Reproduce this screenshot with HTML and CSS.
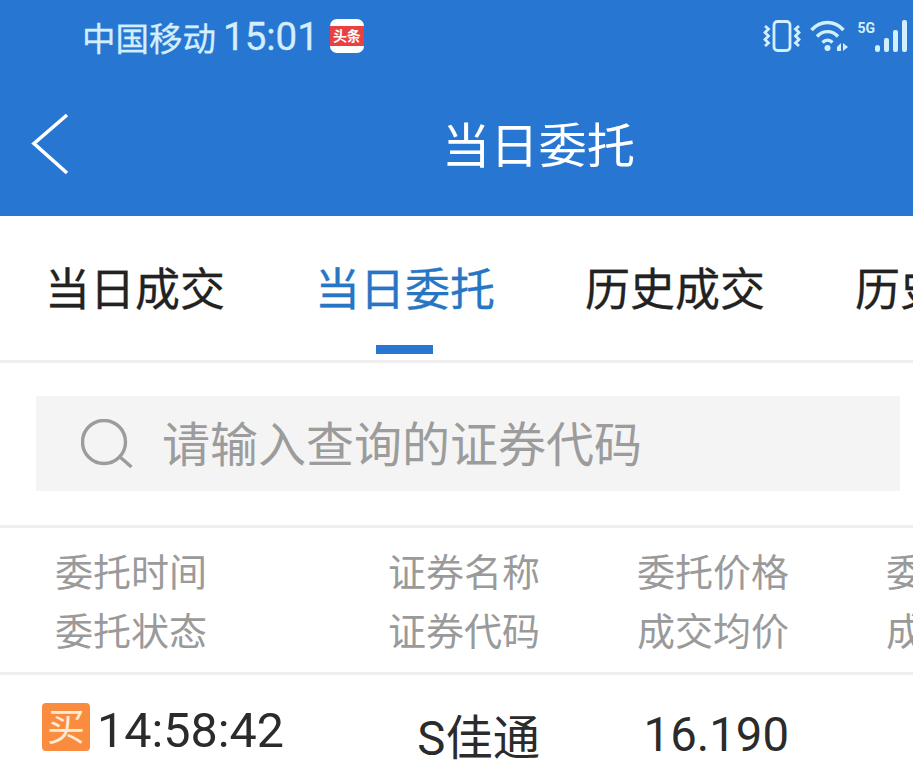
FILE: index.html
```html
<!DOCTYPE html>
<html>
<head>
  <title>当日委托</title>
  <link rel="stylesheet" href="styles.css">
</head>
<body>

  <div class="top">
    <div class="status">
      <div class="status-left">
        <span class="carrier">中国移动</span>
        <span class="clock">15:01</span>
        <span class="app-badge"><span class="app-band">头条</span></span>
      </div>
      <div class="status-right">
        <svg width="38" height="32" viewBox="0 0 38 32" fill="none" stroke="#d3eefc" stroke-width="2.800">
          <rect x="11" y="1.500" width="16" height="29" rx="3.500"/>
          <path d="M2 6 L5.500 9 L2 12.500 L5.500 16 L2 19.500 L5.500 23 L2 26"/>
          <path d="M36 6 L32.500 9 L36 12.500 L32.500 16 L36 19.500 L32.500 23 L36 26"/>
        </svg>
        <svg width="38" height="32" viewBox="0 0 38 32" fill="none" stroke="#d3eefc" stroke-width="3.400">
          <path d="M1.500 10 C10.500 0 24.500 0 33.500 10"/>
          <path d="M7 16.500 C13 10 22 10 28 16.500"/>
          <path d="M12.500 22.500 C15.500 19.500 19.500 19.500 22.500 22.500"/>
          <circle cx="17.500" cy="28" r="3" fill="#d3eefc" stroke="none"/>
          <path d="M27 27 L31 23 V31 H27 Z" fill="#d3eefc" stroke="none"/>
          <path d="M33 23 L38 27 L33 31 Z" fill="#d3eefc" stroke="none"/>
        </svg>
        <div class="signal">
          <span class="net">5G</span>
          <svg width="32" height="32" viewBox="0 0 32 32" fill="#d3eefc">
            <rect x="0" y="25" width="5" height="7" rx="2.500"/>
            <rect x="9" y="18" width="5" height="14" rx="2"/>
            <rect x="18" y="10" width="5" height="22" rx="2"/>
            <rect x="27" y="0" width="5" height="32" rx="2"/>
          </svg>
        </div>
      </div>
    </div>
    <div class="navbar">
      <svg class="back" width="40" height="62" viewBox="0 0 40 62" fill="none" stroke="#fff" stroke-width="3.600">
        <path d="M36 2 L3 30.500 L36 60"/>
      </svg>
      <div class="nav-title">当日委托</div>
    </div>
  </div>

  <div class="tabs">
    <div class="tab">当日成交</div>
    <div class="tab active">当日委托</div>
    <div class="tab">历史成交</div>
    <div class="tab">历史委托</div>
  </div>

  <div class="search-wrap">
    <div class="search">
      <svg width="52" height="50" viewBox="0 0 52 50" fill="none" stroke="#9c9c9c" stroke-width="3.400">
        <circle cx="23" cy="23" r="21.500"/>
        <path d="M39 38 L50.500 48"/>
      </svg>
      <span class="placeholder">请输入查询的证券代码</span>
    </div>
  </div>

  <div class="grid head">
    <div class="cell first"><div>委托时间</div><div>委托状态</div></div>
    <div class="cell"><div>证券名称</div><div>证券代码</div></div>
    <div class="cell"><div>委托价格</div><div>成交均价</div></div>
    <div class="cell"><div>委托数量</div><div>成交数量</div></div>
  </div>

  <div class="grid row">
    <div class="cell first time-cell"><span class="buy">买</span><span class="time">14:58:42</span></div>
    <div class="cell val">S佳通</div>
    <div class="cell val">16.190</div>
    <div class="cell val"></div>
  </div>

</body>
</html>
```

FILE: styles.css
```css
html, body {
  margin: 0;
  height: 763px;
  overflow: hidden;
}
body {
  font-family: Roboto, "Noto Sans CJK SC", sans-serif;
  background: #fff;
  color: #2b2b2b;
}
.top {
  height: 216px;
  background: #2776d2;
  color: #fff;
}
.status {
  height: 72px;
  display: flex;
  justify-content: space-between;
  align-items: center;
  padding: 0 0 0 82px;
}
.status-left {
  display: flex;
  align-items: center;
  color: #d3eefc;
}
.carrier {
  font-size: 33.500px;
  -webkit-text-stroke: 0.3px #d3eefc;
}
.clock {
  font-size: 38.500px;
  margin-left: 7px;
  -webkit-text-stroke: 0.3px #d3eefc;
}
.app-badge {
  width: 34px;
  height: 34px;
  margin-left: 11px;
  border-radius: 7px;
  background: #fff;
  display: flex;
  align-items: center;
}
.app-band {
  width: 100%;
  height: 20px;
  line-height: 20px;
  background: #e8413f;
  color: #fff;
  font-size: 14px;
  font-weight: 700;
  text-align: center;
}
.status-right {
  display: flex;
  align-items: center;
  gap: 9px;
  padding-right: 6px;
}
.signal {
  display: flex;
  align-items: flex-start;
}
.net {
  color: #d3eefc;
  font-size: 14px;
  font-weight: 700;
  line-height: 16px;
}
.navbar {
  height: 140px;
  display: flex;
  align-items: center;
  justify-content: center;
  padding-left: 164px;
  position: relative;
}
.back {
  position: absolute;
  left: 31px;
  top: 41px;
}
.nav-title {
  font-size: 48.300px;
}
.tabs {
  height: 144px;
  display: flex;
  gap: 92px;
  padding-left: 45px;
  overflow: hidden;
  border-bottom: 3px solid #eeeeee;
}
.tab {
  flex: none;
  width: 178px;
  font-size: 45px;
  line-height: 150px;
  white-space: nowrap;
  color: #222;
  position: relative;
  -webkit-text-stroke: 0.3px;
}
.tab.active {
  color: #2776c4;
}
.tab.active::after {
  content: "";
  position: absolute;
  left: 61px;
  bottom: 6px;
  width: 57px;
  height: 9px;
  background: #2776d2;
}
.search-wrap {
  height: 165px;
  padding: 33px 13px 0 36px;
  box-sizing: border-box;
  border-bottom: 3px solid #eeeeee;
}
.search {
  height: 95px;
  background: #f4f4f4;
  display: flex;
  align-items: center;
  padding-left: 45px;
}
.placeholder {
  font-size: 48px;
  line-height: 93px;
  padding-top: 4px;
  color: #9c9c9c;
  margin-left: 29px;
  white-space: nowrap;
}
.grid {
  display: grid;
  grid-template-columns: 236px 249px 249px 249px;
  padding-left: 55px;
  width: 1100px;
}
.head {
  height: 147px;
  box-sizing: border-box;
  border-bottom: 3px solid #eeeeee;
  align-content: center;
  padding-top: 5px;
  font-size: 38px;
  line-height: 59px;
  color: #9a9a9a;
}
.cell {
  text-align: right;
}
.cell.first {
  text-align: left;
}
.row {
  align-items: center;
  height: 88px;
  color: #2b2b2b;
}
.time-cell {
  display: flex;
  align-items: center;
  margin-left: -13px;
  padding-top: 10px;
  white-space: nowrap;
}
.buy {
  width: 48px;
  height: 48px;
  border-radius: 4px;
  background: #fa8c3f;
  color: #fdebd3;
  font-size: 38px;
  line-height: 48px;
  text-align: center;
  flex: none;
}
.time {
  font-size: 48.500px;
  margin-left: 7px;
  margin-top: 6px;
}
.val {
  font-size: 47.300px;
  padding-top: 25px;
}
```
